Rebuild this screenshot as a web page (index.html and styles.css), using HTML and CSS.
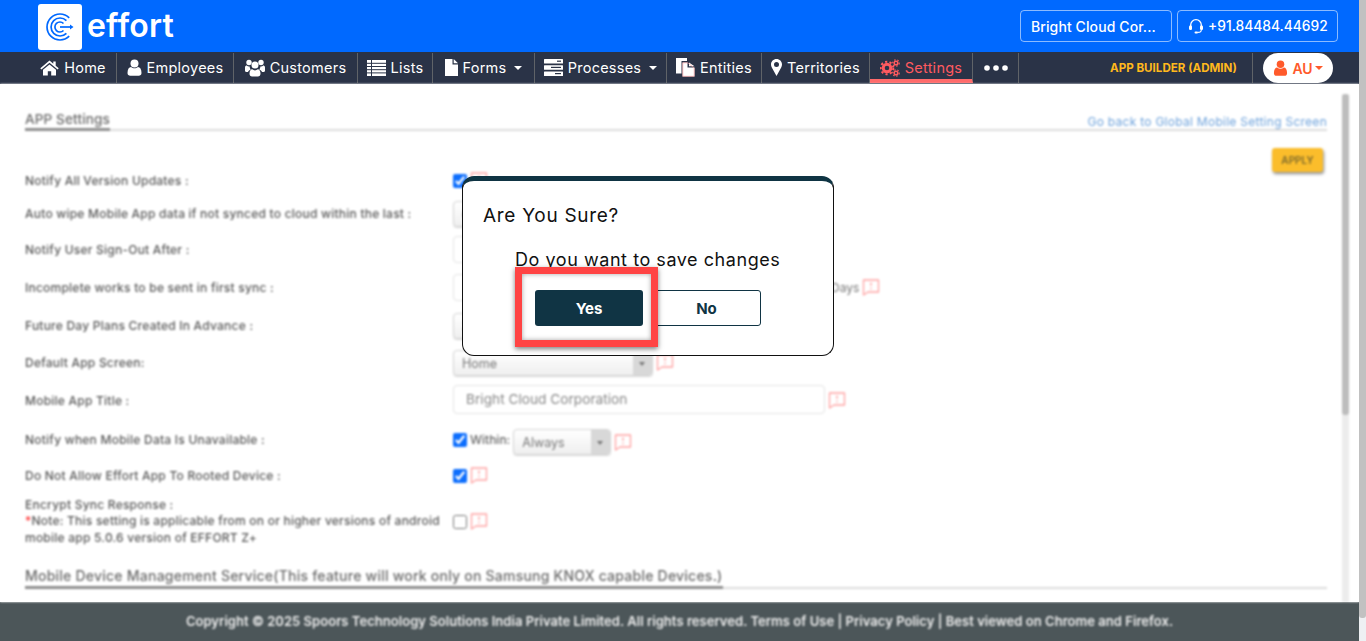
FILE: index.html
```html
<!DOCTYPE html>
<html lang="en">
<head>
<meta charset="utf-8">
<title>Effort - App Settings</title>
<link rel="stylesheet" href="styles.css">
</head>
<body>
<svg class="defs" width="0" height="0" aria-hidden="true">
  <symbol id="note" viewBox="0 0 18 17"><path d="M1.500 1h15v12H6L1.500 16z" fill="none" stroke="currentColor" stroke-width="1.300" stroke-linejoin="round"/><path d="M9 3.500v3.200M9 8.700v1.600" stroke="currentColor" stroke-width="1.400"/></symbol>
</svg>
<div class="app">
  <div class="page">
    <header class="topbar">
      <div class="brand">
        <div class="logo">
          <svg width="44" height="46" viewBox="0 0 44 46"><g fill="none" stroke="#0069ff" stroke-width="1.700"><path d="M31.200 13.800A13 13 0 1 0 31.200 32.200"/><path d="M28.400 16.600A9 9 0 1 0 28.400 29.400"/><path d="M25.500 19.500A5 5 0 1 0 25.500 26.500"/><path d="M22 23H34"/></g><path d="M32 20.500l3.500 2.500-3.500 2.500z" fill="#0069ff"/></svg>
        </div>
        <span class="wordmark">effort</span>
      </div>
      <div class="top-actions">
        <span class="top-btn company">Bright Cloud Cor...</span>
        <span class="top-btn phone">
          <svg width="16" height="16" viewBox="0 0 16 16"><path d="M2.700 9V7a5.300 5.300 0 0 1 10.600 0v2" fill="none" stroke="#fff" stroke-width="1.300"/><rect x="1" y="7.500" width="3" height="4.500" rx="1.200" fill="#fff"/><rect x="12" y="7.500" width="3" height="4.500" rx="1.200" fill="#fff"/><path d="M13.300 12c0 1.700-1.500 2.400-3.500 2.400" fill="none" stroke="#fff" stroke-width="1.100"/><rect x="6.500" y="13.400" width="3.500" height="2" rx="1" fill="#fff"/></svg>
          +91.84484.44692
        </span>
      </div>
    </header>

    <nav class="navbar">
      <div class="nav-items">
        <a class="nav-item">
          <svg width="19" height="16" viewBox="0 0 19 16" fill="#fff"><path d="M9.500 0.500 0.300 8.200l1.100 1.300 8.100-6.800 8.100 6.800 1.100-1.300-3-2.500V1.500h-2.400v2.200z"/><path d="M3 9.800 9.500 4.400 16 9.800V15.500h-4.800v-4.300H7.800v4.300H3z"/></svg>
          Home</a>
        <a class="nav-item">
          <svg width="15" height="17" viewBox="0 0 15 17" fill="#fff"><circle cx="7.500" cy="4.500" r="4"/><path d="M0.500 14c0-4 1.500-6 3.500-6 1 .8 2.200 1.300 3.500 1.300S10 8.800 11 8c2 0 3.500 2 3.500 6 0 1.800-1.200 2.700-2.800 2.700H3.300C1.700 16.700.5 15.800.5 14z"/></svg>
          Employees</a>
        <a class="nav-item">
          <svg width="20" height="18" viewBox="0 0 20 18" fill="#fff"><circle cx="4" cy="3.500" r="2.700"/><circle cx="16" cy="3.500" r="2.700"/><circle cx="10" cy="6" r="3.500"/><path d="M0 8.500C0 7 1 6.500 1.800 6.500c.6.600 1.400 1 2.200 1 .3 0 .5 0 .7-.1-.1.600.2 2 1 3-1.200.4-2.200 1.200-2.800 2.600H1.200C.5 13 0 12.500 0 11.800zM20 8.500c0-1.500-1-2-1.800-2-.6.600-1.400 1-2.200 1-.3 0-.5 0-.7-.1.100.6-.2 2-1 3 1.200.4 2.200 1.200 2.800 2.600h1.700c.7 0 1.200-.5 1.200-1.200zM4.500 14.500c0-2.500 1.200-4.200 2.700-4.200.8.700 1.800 1.100 2.800 1.100s2-.4 2.800-1.100c1.500 0 2.700 1.700 2.700 4.200 0 1.800-1 3-2.600 3H7.100c-1.600 0-2.600-1.200-2.600-3z"/></svg>
          Customers</a>
        <a class="nav-item">
          <svg width="19" height="16" viewBox="0 0 19 16"><path fill="#fff" d="M0 0h19v16H0z"/><path stroke="#2a3347" stroke-width="1" d="M0 3.300h19M0 6.500h19M0 9.700h19M0 12.900h19M4.500 0v16"/></svg>
          Lists</a>
        <a class="nav-item">
          <svg width="13" height="17" viewBox="0 0 13 17" fill="#fff"><path d="M0 0h7.500v5.500H13V17H0z"/><path d="M8.700 0 13 4.300H8.700z"/></svg>
          Forms <i class="caret"></i></a>
        <a class="nav-item">
          <svg width="19" height="17" viewBox="0 0 19 17"><g fill="#fff"><rect y="0" width="19" height="4.500" rx=".5"/><rect y="6.200" width="19" height="4.500" rx=".5"/><rect y="12.400" width="19" height="4.500" rx=".5"/></g><g fill="#2a3347"><rect x="13" y="1.600" width="4" height="1.200"/><rect x="7" y="7.800" width="10" height="1.200"/><rect x="11" y="14" width="6" height="1.200"/></g></svg>
          Processes <i class="caret"></i></a>
        <a class="nav-item">
          <svg width="19" height="19" viewBox="0 0 19 19"><path fill="#fff" d="M0 0h11v3H5.500v12.500H0z"/><path fill="#fff" d="M6.500 4.500H11.500V9.500H18.500V18.500H6.500z"/><path fill="#fff" d="M13 4.500 18.500 8.200H13z"/><path d="M6.800 4.800h5l6.400 5.200v8.300H6.800z" fill="none" stroke="#ff9a9a" stroke-width=".6"/></svg>
          Entities</a>
        <a class="nav-item">
          <svg width="11" height="17" viewBox="0 0 11 17"><path fill="#fff" fill-rule="evenodd" d="M5.500 0C2.400 0 0 2.400 0 5.500c0 1.200.3 1.900.8 3L5.500 17l4.700-8.500c.5-1.100.8-1.800.8-3C11 2.400 8.600 0 5.500 0zm0 8A2.500 2.500 0 1 1 5.500 3a2.500 2.500 0 0 1 0 5z"/></svg>
          Territories</a>
        <a class="nav-item active">
          <svg width="20" height="18" viewBox="0 0 20 18" fill="none" stroke="#ff5a5f"><circle cx="7" cy="9" r="3.800" stroke-width="3"/><circle cx="7" cy="9" r="6.300" stroke-width="2" stroke-dasharray="2.200 2.300"/><circle cx="16" cy="4" r="1.800" stroke-width="1.500"/><circle cx="16" cy="4" r="3.200" stroke-width="1.200" stroke-dasharray="1.500 1.700"/><circle cx="16" cy="14" r="1.800" stroke-width="1.500"/><circle cx="16" cy="14" r="3.200" stroke-width="1.200" stroke-dasharray="1.500 1.700"/></svg>
          Settings</a>
        <a class="nav-item">
          <svg width="24" height="6" viewBox="0 0 24 6" fill="#fff"><circle cx="3" cy="3" r="2.800"/><circle cx="12" cy="3" r="2.800"/><circle cx="21" cy="3" r="2.800"/></svg>
        </a>
      </div>
      <div class="nav-right">
        <span class="role">APP BUILDER (ADMIN)</span>
        <div class="user-slot">
          <span class="user-pill">
            <svg width="15" height="16" viewBox="0 0 15 17" fill="#ff5a2b"><circle cx="7.500" cy="4.500" r="4"/><path d="M0.500 14c0-4 1.500-6 3.500-6 1 .8 2.200 1.300 3.500 1.300S10 8.800 11 8c2 0 3.500 2 3.500 6 0 1.800-1.200 2.700-2.800 2.700H3.300C1.700 16.700.5 15.800.5 14z"/></svg>
            AU<i class="caret small"></i>
          </span>
        </div>
      </div>
    </nav>

    <main class="main">
      <div class="content">
        <div class="section-head">
          <h2 class="section-title">APP Settings</h2>
          <a class="back-link">Go back to Global Mobile Setting Screen</a>
        </div>
        <div class="apply-row"><button class="apply">APPLY</button></div>

        <div class="form">
          <label class="lbl">Notify All Version Updates :</label>
          <div class="ctl"><input type="checkbox" checked><svg class="note"><use href="#note"/></svg></div>

          <label class="lbl">Auto wipe Mobile App data if not synced to cloud within the last :</label>
          <div class="ctl"><div class="sel w200"><span class="val">6</span><i class="sel-arrow"></i></div></div>

          <label class="lbl">Notify User Sign-Out After :</label>
          <div class="ctl"><div class="inp w200"></div></div>

          <label class="lbl">Incomplete works to be sent in first sync :</label>
          <div class="ctl"><div class="inp w372"></div><span class="days">Days</span><svg class="note"><use href="#note"/></svg></div>

          <label class="lbl">Future Day Plans Created In Advance :</label>
          <div class="ctl"><div class="sel w200"><span class="val">3</span><i class="sel-arrow"></i></div></div>

          <label class="lbl">Default App Screen:</label>
          <div class="ctl"><div class="sel w200"><span class="val">Home</span><i class="sel-arrow"></i></div><svg class="note"><use href="#note"/></svg></div>

          <label class="lbl">Mobile App Title :</label>
          <div class="ctl"><div class="inp w372 tall">Bright Cloud Corporation</div><svg class="note"><use href="#note"/></svg></div>

          <label class="lbl">Notify when Mobile Data Is Unavailable :</label>
          <div class="ctl"><input type="checkbox" checked><span class="within">Within:</span><div class="sel w98 low"><span class="val">Always</span><i class="sel-arrow"></i></div><svg class="note low"><use href="#note"/></svg></div>

          <label class="lbl">Do Not Allow Effort App To Rooted Device :</label>
          <div class="ctl"><input type="checkbox" checked><svg class="note"><use href="#note"/></svg></div>

          <label class="lbl multi">Encrypt Sync Response :<br><span class="req">*</span>Note: This setting is applicable from on or higher versions of android<br>mobile app 5.0.6 version of EFFORT Z+</label>
          <div class="ctl"><input type="checkbox"><svg class="note"><use href="#note"/></svg></div>
        </div>

        <div class="section-head second">
          <h2 class="section-title">Mobile Device Management Service(This feature will work only on Samsung KNOX capable Devices.)</h2>
        </div>
      </div>
      <div class="inner-scroll"><div class="inner-thumb"></div></div>
    </main>

    <footer class="footer"><p>Copyright © 2025 Spoors Technology Solutions India Private Limited. All rights reserved. Terms of Use | Privacy Policy | Best viewed on Chrome and Firefox.</p></footer>
  </div>
  <div class="page-scroll"><div class="page-thumb"></div></div>

  <div class="modal" role="dialog">
    <h3 class="modal-title">Are You Sure?</h3>
    <p class="modal-text">Do you want to save changes</p>
    <div class="modal-btns">
      <button class="btn yes">Yes</button>
      <button class="btn no">No</button>
    </div>
    <div class="highlight"></div>
  </div>
</div>
</body>
</html>
```

FILE: styles.css
```css
* { box-sizing: border-box; }
html, body { margin: 0; height: 100%; overflow: hidden; }
body { font-family: Inter, "Open Sans", "Liberation Sans", sans-serif; background: #fff; }
.defs { position: absolute; }

.app { position: relative; display: flex; width: 1366px; height: 641px; }
.page { width: 1359px; display: flex; flex-direction: column; height: 641px; overflow: hidden; }

.page-scroll { width: 7px; background: #eef0f3; }
.page-thumb { height: 618px; background: #c1c1c1; border-radius: 0 0 3px 3px; }

/* top bar */
.topbar { height: 52px; background: #0069ff; display: flex; justify-content: space-between; align-items: center; padding: 0 21px 0 38px; flex: none; }
.brand { display: flex; align-items: center; gap: 5px; }
.logo { width: 44px; height: 46px; background: #fff; border-radius: 3px; margin-top: 1px; }
.logo svg { display: block; }
.wordmark { color: #fff; font-size: 32px; font-weight: 600; line-height: 46px; letter-spacing: .2px; }
.top-actions { display: flex; gap: 5px; }
.top-btn { height: 32px; border: 1px solid rgba(255,255,255,.55); border-radius: 4px; color: #fff; font-size: 14px; font-weight: 500; display: flex; align-items: center; white-space: nowrap; }
.company { width: 152px; padding-left: 10px; letter-spacing: .1px; }
.phone { width: 161px; padding-left: 10px; gap: 4px; font-size: 13.800px; }

/* nav */
.navbar { height: 32px; background: #2a3347; display: flex; justify-content: space-between; flex: none; padding-left: 30px; }
.nav-items { display: grid; grid-template-columns: 87px 117px 124px 75px 102px 132px 95px 108px 103px 46px; }
.nav-item { display: flex; align-items: center; justify-content: center; gap: 5px; color: #fff; font-size: 14.500px; letter-spacing: .25px; border-right: 1px solid #5f6368; margin: 1px 0; padding-bottom: 1px; white-space: nowrap; }
.nav-item.active { color: #ff5a5f; border-bottom: 4px solid #ff6b6b; margin-bottom: 1px; padding: 3px 0 0; }
.caret { display: inline-block; width: 0; height: 0; border-left: 4px solid transparent; border-right: 4px solid transparent; border-top: 4px solid #fff; margin-left: 3px; }
.caret.small { border-top-color: #ff5a2b; margin-left: -2px; }
.nav-right { display: flex; align-items: stretch; }
.role { color: #ffb81c; font-size: 11.600px; font-weight: 700; align-self: center; width: 142px; white-space: nowrap; }
.user-slot { border-left: 1px solid #5f6368; margin: 1px 0; padding-left: 10px; width: 107px; display: flex; align-items: center; }
.user-pill { width: 70px; height: 30px; background: #fff; border-radius: 15px; display: flex; align-items: center; justify-content: center; gap: 4px; color: #ff5a2b; font-size: 14px; font-weight: 600; }

/* main, blurred behind the dialog */
.main { height: 518px; flex: none; display: flex; background: #fff; overflow: hidden; filter: blur(1.300px); }
.content { flex: 1; min-width: 0; padding: 24px 15px 0 25px; color: #555; }
.section-head { height: 23px; display: flex; justify-content: space-between; align-items: flex-start; border-bottom: 2px solid #dcdcdc; }
.section-title { margin: 0; height: 23px; font-size: 13.600px; font-weight: 500; letter-spacing: .1px; line-height: 22px; color: #6a6a6a; border-bottom: 3px solid #8f8f8f; white-space: nowrap; }
.back-link { font-size: 12px; letter-spacing: .27px; line-height: 28px; color: #6fa3dc; white-space: nowrap; }
.second { margin-top: 16px; }
.second .section-title { font-size: 14px; letter-spacing: .23px; line-height: 20px; }
.apply-row { display: flex; justify-content: flex-end; padding-right: 4px; margin: 17px 0 -8px; }
.apply { width: 51px; height: 24px; border: 0; border-radius: 3px; background: #fbbd2b; box-shadow: 1px 2px 3px rgba(0,0,0,.45); font: 600 10px Inter, sans-serif; color: #7d6a2d; padding: 0; }

.form { display: grid; grid-template-columns: 428px 1fr; grid-template-rows: 33px 33px 39px 37px 39px 35px 41px 37px 35px 57px; }
.lbl { align-self: center; font-size: 12px; letter-spacing: .23px; color: #595959; font-weight: 500; white-space: nowrap; }
.lbl.multi { line-height: 16.500px; }
.req { color: #f33; }
.ctl { display: flex; align-items: center; min-width: 0; }
.ctl input { width: 14px; height: 14px; margin: 0; accent-color: #0d6efd; flex: none; }
.note { width: 18px; height: 17px; color: #ffa3a3; margin-left: 3px; flex: none; }
.low { margin-top: 5px; }
.sel { height: 26px; border: 1px solid #d4d4d4; border-radius: 4px; background: linear-gradient(#fff, #efefef); display: flex; justify-content: space-between; font-size: 12.500px; color: #777; box-shadow: 0 1px 1px rgba(0,0,0,.15); }
.val { padding-left: 8px; line-height: 26px; }
.sel-arrow { width: 19px; background: #d8d8d8; border-radius: 0 3px 3px 0; position: relative; }
.sel-arrow::after { content: ""; position: absolute; left: 6px; top: 11px; border-left: 3.500px solid transparent; border-right: 3.500px solid transparent; border-top: 4px solid #777; }
.w200 { width: 200px; }
.w98 { width: 98px; }
.inp { height: 27px; border: 1px solid #e4e4e4; border-radius: 4px; background: #fff; }
.w372 { width: 372px; }
.tall { height: 29px; margin-top: -2px; padding-left: 12px; font-size: 13.700px; line-height: 26px; color: #888; }
.days { font-size: 12px; margin-left: 6px; color: #777; }
.within { font-size: 12px; color: #666; margin: 0 3px; font-weight: 500; }

.inner-scroll { width: 7px; margin: 10px 10px 0 0; background: #ececec; flex: none; }
.inner-thumb { height: 321px; background: #bdbdbd; border-radius: 3px; }

/* footer */
.footer { height: 39px; flex: none; background: #4c5659; display: flex; align-items: center; justify-content: center; padding-bottom: 2px; }
.footer p { margin: 0; color: #eee; font-size: 13px; letter-spacing: .04px; font-weight: 600; white-space: nowrap; filter: blur(.8px); }

/* dialog */
.modal { position: absolute; left: 462px; top: 176px; width: 372px; height: 180px; background: #fff; border: 1px solid #111; border-top: 5px solid #0f3443; border-radius: 12px; }
.modal-title { margin: 0; padding: 23px 0 0 20px; font-size: 19px; letter-spacing: .7px; font-weight: 400; line-height: 24px; color: #111; }
.modal-text { margin: 20px 0 0 52px; font-size: 18px; letter-spacing: .55px; line-height: 24px; color: #111; white-space: nowrap; }
.modal-btns { display: flex; margin: 18px 0 0 72px; }
.btn { height: 36px; font: 700 15px Inter, sans-serif; border-radius: 3px; padding: 0; }
.yes { width: 108px; background: #103444; color: #fff; border: 0; }
.no { width: 109px; margin-left: 9px; background: #fff; color: #103444; border: 1px solid #103444; }
.highlight { position: absolute; left: 52px; top: 86px; width: 143px; height: 80px; border: 7px solid #ff4444; box-shadow: 0 2px 5px rgba(0,0,0,.5), inset 0 0 5px rgba(0,0,0,.35); }
```
